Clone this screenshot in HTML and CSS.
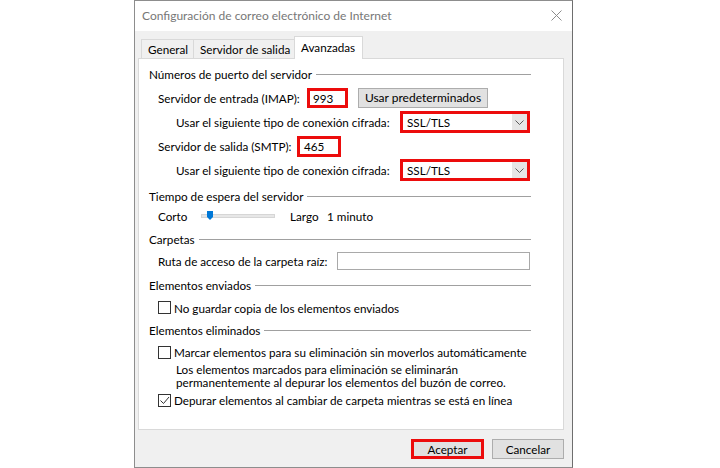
FILE: index.html
```html
<!DOCTYPE html>
<html lang="es">
<head>
  <meta charset="UTF-8">
  <meta name="viewport" content="width=device-width, initial-scale=1.0">
  <title>Configuración de correo electrónico de Internet</title>
  <link rel="stylesheet" href="styles.css">
</head>
<body>
  <div class="dialog">
    <!-- Barra de título -->
    <div class="titlebar">
      <span class="title">Configuración de correo electrónico de Internet</span>
      <svg class="close" width="11" height="11" viewBox="0 0 11 11">
        <path d="M0.5 0.5 L10.5 10.5 M10.5 0.5 L0.5 10.5" stroke="#8c8c8c" stroke-width="1" fill="none"/>
      </svg>
    </div>

    <div class="content">
      <!-- Pestañas -->
      <div class="tabs">
        <div class="tab tab-general">General</div>
        <div class="tab tab-salida">Servidor de salida</div>
        <div class="tab tab-active">Avanzadas</div>
      </div>

      <div class="panel">
        <div class="group-title">Números de puerto del servidor</div>

        <div class="row indent first">
          <span class="lbl lbl-imap">Servidor de entrada (IMAP):</span>
          <div class="port mark port-imap">993</div>
          <div class="btn btn-defaults">Usar predeterminados</div>
        </div>
        <div class="row indent-2">
          <span class="lbl lbl-cifrado">Usar el siguiente tipo de conexión cifrada:</span>
          <div class="select mark">
            <span class="select-value">SSL/TLS</span>
            <span class="select-arrow">
              <svg width="9" height="5" viewBox="0 0 9 5"><path d="M0.5 0.5 L4.5 4.5 L8.5 0.5" stroke="#5a5a5a" fill="none"/></svg>
            </span>
          </div>
        </div>
        <div class="row indent">
          <span class="lbl lbl-smtp">Servidor de salida (SMTP):</span>
          <div class="port mark port-smtp">465</div>
        </div>
        <div class="row indent-2">
          <span class="lbl lbl-cifrado">Usar el siguiente tipo de conexión cifrada:</span>
          <div class="select mark">
            <span class="select-value">SSL/TLS</span>
            <span class="select-arrow">
              <svg width="9" height="5" viewBox="0 0 9 5"><path d="M0.5 0.5 L4.5 4.5 L8.5 0.5" stroke="#5a5a5a" fill="none"/></svg>
            </span>
          </div>
        </div>

        <div class="group-title gap-6">Tiempo de espera del servidor</div>
        <div class="row indent">
          <span class="lbl lbl-corto">Corto</span>
          <div class="slider">
            <svg class="thumb" width="6" height="9" viewBox="0 0 6 9"><path d="M0 0 H6 V6 L3 9 L0 6 Z" fill="#0078d7"/></svg>
          </div>
          <span class="lbl lbl-largo">Largo</span>
          <span>1 minuto</span>
        </div>

        <div class="group-title gap-3">Carpetas</div>
        <div class="row indent gap-2">
          <span class="lbl lbl-ruta">Ruta de acceso de la carpeta raíz:</span>
          <div class="textbox"></div>
        </div>

        <div class="group-title gap-4">Elementos enviados</div>
        <div class="row indent gap-3 tall">
          <span class="checkbox"></span>
          <span>No guardar copia de los elementos enviados</span>
        </div>

        <div class="group-title gap-3">Elementos eliminados</div>
        <div class="row indent gap-3 short">
          <span class="checkbox"></span>
          <span>Marcar elementos para su eliminación sin moverlos automáticamente</span>
        </div>
        <p class="note">Los elementos marcados para eliminación se eliminarán<br>permanentemente al depurar los elementos del buzón de correo.</p>
        <div class="row indent short">
          <span class="checkbox">
            <svg width="11" height="11" viewBox="0 0 11 11"><path d="M1.5 5.5 L4.5 8.5 L10 2" stroke="#333" stroke-width="1" fill="none"/></svg>
          </span>
          <span>Depurar elementos al cambiar de carpeta mientras se está en línea</span>
        </div>
      </div>

      <!-- Botones -->
      <div class="actions">
        <div class="btn btn-action mark">Aceptar</div>
        <div class="btn btn-action">Cancelar</div>
      </div>
    </div>
  </div>
</body>
</html>
```

FILE: styles.css
```css
* {
  box-sizing: border-box;
}
body {
  margin: 0;
  background: #fff;
  font-family: Lato, "Noto Sans", sans-serif;
  font-size: 11.7px;
  color: #000;
}
.dialog {
  margin-left: 134px;
  width: 439px;
  height: 468px;
  border: 1px solid #8d8d8d;
  border-right-color: #6e6e6e;
  background: #f0f0f0;
  display: flex;
  flex-direction: column;
}
.titlebar {
  height: 30px;
  background: #fff;
  display: flex;
  align-items: center;
  justify-content: space-between;
  padding: 0 10px 1px 7px;
}
.title {
  color: #777;
  font-size: 12px;
}
.content {
  padding: 5px 8px 0 3px;
}
.tabs {
  display: flex;
  align-items: flex-end;
  height: 22px;
  padding-left: 3px;
}
.tab {
  height: 19px;
  line-height: 19px;
  padding-left: 6px;
  white-space: nowrap;
  background: #f0f0f0;
  border: 1px solid #d9d9d9;
  border-bottom: none;
  border-right: none;
}
.tab-general {
  width: 52px;
}
.tab-salida {
  width: 101px;
}
.tab-active {
  position: relative;
  width: 69px;
  height: 23px;
  line-height: 20px;
  margin-bottom: -1px;
  background: #fff;
  border-right: 1px solid #d9d9d9;
}
.panel {
  height: 372px;
  background: #fff;
  border: 1px solid #d9d9d9;
  padding: 7px 32px 0 10px;
}
.group-title {
  display: flex;
  align-items: center;
  height: 16px;
  white-space: nowrap;
}
.group-title::after {
  content: "";
  flex: 1;
  height: 1px;
  margin-left: 4px;
  background: #a0a0a0;
}
.row {
  display: flex;
  align-items: center;
  height: 24px;
  white-space: nowrap;
}
.row.first {
  margin-top: 4px;
}
.row.tall {
  height: 23px;
}
.row.short {
  height: 22px;
}
.indent {
  padding-left: 9px;
}
.indent-2 {
  padding-left: 27px;
}
.gap-2 { margin-top: 2px; }
.gap-3 { margin-top: 3px; }
.gap-4 { margin-top: 4px; }
.gap-6 { margin-top: 6px; }

.lbl {
  flex-shrink: 0;
}
.lbl-imap { width: 149px; }
.lbl-cifrado { width: 224px; }
.lbl-smtp { width: 139px; }
.lbl-corto { width: 43px; }
.lbl-largo { width: 37px; }
.lbl-ruta { width: 179px; }

.mark {
  border: 3px solid #ec0c0c !important;
  line-height: 14px !important;
}
.port {
  height: 20px;
  padding-left: 3px;
  background: #fff;
}
.port-imap {
  width: 41px;
}
.port-smtp {
  width: 44px;
  height: 21px;
  padding-left: 4px;
}
.btn {
  height: 20px;
  line-height: 18px;
  text-align: center;
  background: #e1e1e1;
  border: 1px solid #adadad;
}
.btn-defaults {
  width: 130px;
  margin-left: 10px;
  font-size: 12px;
}
.select {
  display: flex;
  width: 130px;
  height: 22px;
  background: #fff;
}
.select-value {
  flex: 1;
  line-height: 16px;
  padding-left: 4px;
}
.select-arrow {
  width: 15px;
  background: #e6e6e6;
  display: flex;
  align-items: center;
  justify-content: center;
}
.slider {
  position: relative;
  width: 74px;
  height: 4px;
  margin-right: 15px;
  background: #e7e7e7;
  border: 1px solid #d6d6d6;
}
.thumb {
  position: absolute;
  left: 5px;
  top: -4px;
}
.textbox {
  width: 193px;
  height: 18px;
  background: #fff;
  border: 1px solid #a9a9a9;
}
.checkbox {
  flex-shrink: 0;
  width: 13px;
  height: 13px;
  margin-right: 3px;
  background: #fff;
  border: 1px solid #333;
  display: flex;
  align-items: center;
  justify-content: center;
}
.note {
  margin: 0;
  padding-left: 27px;
  line-height: 13px;
}
.actions {
  display: flex;
  justify-content: flex-end;
  gap: 8px;
  margin-top: 9px;
}
.btn-action {
  width: 73px;
}
.btn-action + .btn-action {
  width: 72px;
}
```
